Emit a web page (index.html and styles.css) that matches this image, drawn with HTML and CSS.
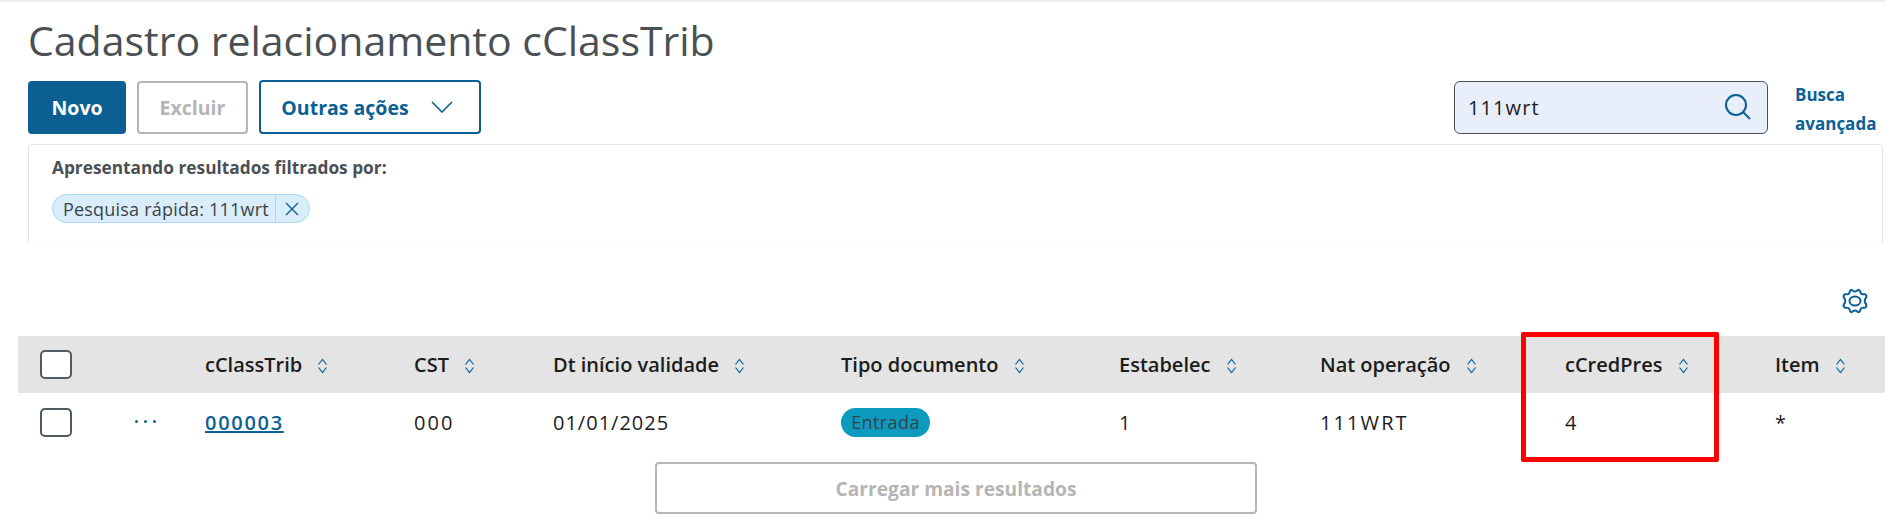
FILE: index.html

```html
<!DOCTYPE html>
<html lang="pt-BR">
<head>
  <meta charset="UTF-8">
  <title>Cadastro relacionamento cClassTrib</title>
  <link rel="stylesheet" href="styles.css">
</head>
<body>
<div class="page">
  <h1 class="title">Cadastro relacionamento cClassTrib</h1>

  <div class="toolbar">
    <button class="btn btn-primary">Novo</button>
    <button class="btn btn-disabled">Excluir</button>
    <button class="btn btn-outline">
      Outras ações
      <svg class="chevron" viewBox="0 0 22 12"><path d="M1 1l10 10L21 1"/></svg>
    </button>
    <div class="search">
      <span class="search-value">111wrt</span>
      <svg class="search-icon" viewBox="0 0 28 26"><circle cx="12" cy="11" r="10"/><path d="M19 18l7 7"/></svg>
    </div>
    <a class="advanced">Busca<br>avançada</a>
  </div>

  <div class="filters">
    <p class="filters-label">Apresentando resultados filtrados por:</p>
    <div class="chip">
      <span class="chip-text">Pesquisa rápida: 111wrt</span>
      <span class="chip-close"><svg viewBox="0 0 14 14"><path d="M1 1l12 12M13 1L1 13"/></svg></span>
    </div>
  </div>

  <div class="settings">
    <svg class="gear" viewBox="0 0 30 26">
      <path d="M11 2c1-1 2 1.500 4 1.500S18 1 19 2c1.500.6 1 3 2.500 4s4-.5 4.500 1c.8 1.400.5 2.500-.5 3.500-1 1.200-1 3.800 0 5 1 1 1.300 2.100.5 3.500-.5 1.500-3 0-4.500 1S20.500 23.400 19 24c-1 1-2-1.500-4-1.500S12 25 11 24c-1.500-.6-1-3-2.500-4s-4 .5-4.500-1c-.8-1.400-.5-2.500.5-3.500 1-1.200 1-3.800 0-5C3.500 9.500 3.200 8.400 4 7c.5-1.500 3 0 4.500-1S9.500 2.600 11 2z"/>
      <ellipse cx="15" cy="13" rx="5.500" ry="4.500"/>
    </svg>
  </div>

  <table class="grid">
    <colgroup>
      <col class="c-check"><col class="c-actions"><col class="c-class"><col class="c-cst">
      <col class="c-date"><col class="c-type"><col class="c-est"><col class="c-nat">
      <col class="c-cred"><col class="c-item">
    </colgroup>
    <thead>
      <tr>
        <th><span class="check"></span></th>
        <th></th>
        <th>cClassTrib <svg class="sort" viewBox="0 0 10 16"><path d="M1 6.500l4-5 4 5M1 9.500l4 5 4-5"/></svg></th>
        <th>CST <svg class="sort" viewBox="0 0 10 16"><path d="M1 6.500l4-5 4 5M1 9.500l4 5 4-5"/></svg></th>
        <th>Dt início validade <svg class="sort" viewBox="0 0 10 16"><path d="M1 6.500l4-5 4 5M1 9.500l4 5 4-5"/></svg></th>
        <th>Tipo documento <svg class="sort" viewBox="0 0 10 16"><path d="M1 6.500l4-5 4 5M1 9.500l4 5 4-5"/></svg></th>
        <th>Estabelec <svg class="sort" viewBox="0 0 10 16"><path d="M1 6.500l4-5 4 5M1 9.500l4 5 4-5"/></svg></th>
        <th>Nat operação <svg class="sort" viewBox="0 0 10 16"><path d="M1 6.500l4-5 4 5M1 9.500l4 5 4-5"/></svg></th>
        <th>cCredPres <svg class="sort" viewBox="0 0 10 16"><path d="M1 6.500l4-5 4 5M1 9.500l4 5 4-5"/></svg></th>
        <th>Item <svg class="sort" viewBox="0 0 10 16"><path d="M1 6.500l4-5 4 5M1 9.500l4 5 4-5"/></svg></th>
      </tr>
    </thead>
    <tbody>
      <tr>
        <td><span class="check"></span></td>
        <td><span class="dots"><i></i><i></i><i></i></span></td>
        <td><a class="code">000003</a></td>
        <td>000</td>
        <td class="date">01/01/2025</td>
        <td><span class="badge">Entrada</span></td>
        <td>1</td>
        <td>111WRT</td>
        <td>4</td>
        <td>*</td>
      </tr>
    </tbody>
  </table>

  <div class="more">
    <button class="btn-more">Carregar mais resultados</button>
  </div>

  <div class="highlight"></div>
</div>
</body>
</html>
```

FILE: styles.css

```css
* { box-sizing: border-box; }
body {
  margin: 0;
  font-family: 'Open Sans', 'Noto Sans', sans-serif;
  background: #fff;
  color: #1c1c1c;
}
.page {
  position: relative;
  height: 518px;
  overflow: hidden;
  border-top: 2px solid #f3eeee;
}
.title {
  margin: 0;
  padding: 14px 0 0 28px;
  height: 78px;
  font-size: 41px;
  line-height: 48px;
  font-weight: 400;
  color: #4a5054;
}
.toolbar {
  display: flex;
  align-items: center;
  height: 54px;
  padding-left: 28px;
}
.btn {
  height: 53px;
  border-radius: 4px;
  font-family: inherit;
  font-size: 19.5px;
  font-weight: 700;
  background: #fff;
  margin-right: 11px;
}
.btn-primary {
  width: 98px;
  border: none;
  background: #0b5f92;
  color: #fff;
}
.btn-disabled {
  width: 111px;
  border: 2px solid #b5b5b5;
  color: #b5b5b5;
}
.btn-outline {
  width: 222px;
  height: 54px;
  padding: 0 6px 0 0;
  border: 2px solid #0b5f92;
  color: #0b5f92;
  display: flex;
  align-items: center;
  justify-content: center;
  gap: 22px;
}
.chevron {
  width: 22px;
  height: 12px;
  fill: none;
  stroke: #0b5f92;
  stroke-width: 1.6;
}
.search {
  margin-left: auto;
  width: 314px;
  height: 53px;
  border: 1px solid #4a5054;
  border-radius: 6px;
  background: #e8effb;
  display: flex;
  align-items: center;
  justify-content: space-between;
  padding: 0 15px 0 13px;
  font-size: 20px;
  letter-spacing: 1.1px;
}
.search-icon {
  width: 28px;
  height: 26px;
  fill: none;
  stroke: #0b5f92;
  stroke-width: 2;
}
.advanced {
  width: 117px;
  padding: 3px 0 0 27px;
  font-size: 17px;
  line-height: 29px;
  font-weight: 700;
  color: #0b6196;
  white-space: nowrap;
}
.filters {
  margin: 10px 2px 0 28px;
  height: 100px;
  border: 1px solid #e6e6e6;
  border-bottom-color: #fbfbfb;
  border-radius: 4px;
  padding: 12px 23px;
}
.filters-label {
  margin: 0 0 15px;
  font-size: 17.3px;
  line-height: 22px;
  font-weight: 700;
  color: #4a5054;
}
.chip {
  display: inline-flex;
  align-items: center;
  height: 29px;
  border: 1px solid #a9d8f5;
  border-radius: 15px;
  background: #d9edfb;
  font-size: 18px;
  color: #3d4347;
}
.chip-text {
  padding: 0 6px 0 10px;
  letter-spacing: .2px;
}
.chip-close {
  display: flex;
  align-items: center;
  justify-content: center;
  width: 34px;
  height: 27px;
  border-left: 1px solid #a9d8f5;
}
.chip-close svg {
  width: 14px;
  height: 14px;
  fill: none;
  stroke: #0b5f92;
  stroke-width: 1.4;
}
.settings {
  display: flex;
  justify-content: flex-end;
  height: 92px;
  padding: 44px 15px 0 0;
}
.gear {
  width: 30px;
  height: 26px;
  fill: none;
  stroke: #0b6196;
  stroke-width: 2;
}
.grid {
  width: 1867px;
  margin-left: 18px;
  border-collapse: collapse;
  table-layout: fixed;
  font-size: 20px;
}
.c-check { width: 117px; }
.c-actions { width: 70px; }
.c-class { width: 209px; }
.c-cst { width: 139px; }
.c-date { width: 288px; }
.c-type { width: 278px; }
.c-est { width: 201px; }
.c-nat { width: 245px; }
.c-cred { width: 210px; }
.c-item { width: 110px; }
.grid th {
  height: 57px;
  background: #e4e4e4;
  text-align: left;
  padding: 0;
  font-weight: 600;
  white-space: nowrap;
}
.grid td {
  height: 59px;
  padding: 0;
  letter-spacing: 2.1px;
}
.grid td.date { letter-spacing: 1px; }
.check {
  display: block;
  width: 32px;
  height: 29px;
  margin-left: 22px;
  border: 2px solid #4f5b62;
  border-radius: 5px;
  background: #fff;
}
.sort {
  width: 11px;
  height: 16px;
  margin-left: 10px;
  vertical-align: -2px;
  fill: none;
  stroke: #0b6196;
  stroke-width: 1.2;
}
.dots {
  display: flex;
  gap: 6px;
  margin-top: -2px;
}
.dots i {
  width: 3px;
  height: 3px;
  border-radius: 50%;
  background: #0b6196;
}
.code {
  color: #0b6196;
  font-weight: 600;
  letter-spacing: 1.7px;
  text-decoration: underline;
}
.badge {
  display: inline-block;
  width: 89px;
  height: 29px;
  border-radius: 15px;
  background: #0c9abe;
  color: #37424a;
  font-size: 18px;
  line-height: 29px;
  letter-spacing: .4px;
  text-align: center;
}
.more {
  display: flex;
  justify-content: center;
  margin-top: 10px;
}
.btn-more {
  width: 602px;
  height: 52px;
  margin-left: 27px;
  border: 2px solid #b5b5b5;
  border-radius: 4px;
  background: #fff;
  font-family: inherit;
  font-size: 19.2px;
  font-weight: 700;
  color: #b5b5b5;
}
.highlight {
  position: absolute;
  left: 1521px;
  top: 330px;
  width: 198px;
  height: 130px;
  border: 5px solid #fe0000;
  border-radius: 2px;
}
```
